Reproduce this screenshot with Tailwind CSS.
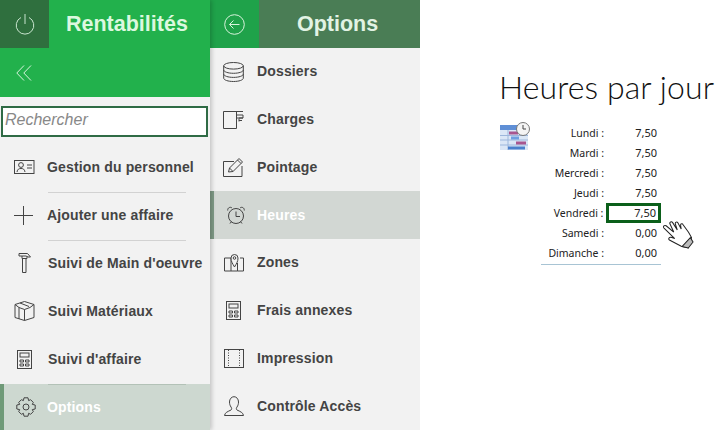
<!DOCTYPE html>
<html lang="fr"><head><meta charset="utf-8">
<script src="https://cdn.jsdelivr.net/npm/@tailwindcss/browser@4"></script></head>
<body class="bg-white">
<div class="flex h-[430px] w-[723px] overflow-hidden bg-white font-['Liberation_Sans',sans-serif]">

<aside class="relative z-20 flex h-[430px] w-[210px] shrink-0 flex-col bg-[#f2f2f2] shadow-[2px_0_4px_rgba(0,0,0,0.18)]">
  <div class="flex h-[48px] bg-[#22b14c]">
    <div class="flex w-[49px] items-center justify-center bg-[#2f6f3e]">
      <svg width="22" height="24" viewBox="0 0 22 24" fill="none" stroke="#c9e5cf" stroke-width="1"><path d="M7 5.500a8.800 8.800 0 1 0 8 0"/><path d="M11 2v10"/></svg>
    </div>
    <div class="pl-[17px] text-[21.5px] leading-[48px] font-bold text-[#dcf8df]">Rentabilités</div>
  </div>
  <div class="flex h-[49px] items-center bg-[#22b14c] pl-[16px]">
    <svg width="16" height="16" viewBox="0 0 16 16" fill="none" stroke="#d8f3dc" stroke-width="1"><path d="M8 .5 .8 8 8 15.500M15 .5 7.800 8 15 15.500"/></svg>
  </div>
  <div class="h-[46px] px-[1px] pt-[9px]">
    <div class="h-[31px] w-[207px] border-2 border-[#2f6b45] bg-white pl-[2px] text-[16px] leading-[24px] text-[#888] italic">Rechercher</div>
  </div>

  <div class="flex h-12 items-center text-[14px] font-bold tracking-[0.15px] text-[#444]">
    <div class="flex w-[47px] justify-center pl-[1px]"><svg width="21" height="14" viewBox="0 0 21 14" fill="none" stroke="#444" stroke-width="1"><rect x=".5" y=".5" width="19.500" height="13"/><circle cx="7" cy="5" r="2.400"/><path d="M3 12c.5-3 2-3.500 4-3.500s3.500.5 4 3.500M13 5h5M13 8h5"/></svg></div>
    <span>Gestion du personnel</span>
  </div>
  <div class="mt-px -mb-[2px] ml-[48px] h-px w-[138px] bg-[#d2d2d2]"></div>
  <div class="flex h-12 items-center text-[14px] font-bold tracking-[0.15px] text-[#444]">
    <div class="flex w-[47px] justify-center"><svg width="19" height="19" viewBox="0 0 19 19" fill="none" stroke="#444" stroke-width="1"><path d="M9.500 0v19M0 9.500h19"/></svg></div>
    <span>Ajouter une affaire</span>
  </div>
  <div class="mt-px -mb-[2px] ml-[48px] h-px w-[138px] bg-[#d2d2d2]"></div>
  <div class="flex h-12 items-center text-[14px] font-bold tracking-[0.15px] text-[#444]">
    <div class="flex w-[48px] justify-center"><svg width="13" height="20" viewBox="0 0 13 20" fill="none" stroke="#444" stroke-width="1"><path d="M1 .5h8.500l3 3.500H9.500L8.500 3H1zM4.500 5.500h3.500v14H4.500zM4 3v2.500h5V3"/></svg></div>
    <span>Suivi de Main d'oeuvre</span>
  </div>
  <div class="flex h-12 items-center text-[14px] font-bold tracking-[0.15px] text-[#444]">
    <div class="flex w-[48px] justify-center"><svg width="21" height="20" viewBox="0 0 21 20" fill="none" stroke="#444" stroke-width="1"><path d="M10.500.5 20 3.500v13l-9.500 3-9.500-3v-13zM1 3.500l4 3 5.500 2v11M20 3.500l-4 3-5.500 2M5 6.500V18M6 2l9 3.500"/></svg></div>
    <span>Suivi Matériaux</span>
  </div>
  <div class="flex h-12 items-center text-[14px] font-bold tracking-[0.15px] text-[#444]">
    <div class="flex w-[48px] justify-center"><svg width="15" height="19" viewBox="0 0 15 19" fill="none" stroke="#444" stroke-width="1"><rect x=".5" y=".5" width="14" height="18"/><rect x="3" y="3" width="9" height="4"/><path d="M3 10h3.500v2H3zM8.500 10H12v2H8.500zM3 14h3.500v2H3zM8.500 14H12v2H8.500z"/></svg></div>
    <span>Suivi d'affaire</span>
  </div>
  <div class="mt-px flex h-[46px] items-center border-l-[4px] border-[#6f9a78] bg-[#cdd8d0] text-[14px] font-bold tracking-[0.15px] text-white">
    <div class="flex w-[43px] justify-center"><svg width="20" height="20" viewBox="0 0 20 20" fill="none" stroke="#444" stroke-width="1"><path d="M8 .8h4l.6 2.800 2-.9 2.700 2.700-1 2 2.900.6v4l-2.900.6 1 2-2.700 2.700-2-1-.6 2.900H8l-.6-2.900-2 1-2.700-2.700 1-2-2.900-.6v-4l2.900-.6-1-2 2.700-2.700 2 .9z"/><circle cx="10" cy="10" r="3"/></svg></div>
    <span>Options</span>
  </div>
  <div class="absolute top-[384px] left-[48px] h-px w-[138px] bg-[#b3c2b7]"></div>
</aside>

<section class="z-10 flex h-[430px] w-[210px] shrink-0 flex-col bg-[#f2f2f2]">
  <div class="flex h-[48px] bg-[#4a7d55]">
    <div class="flex w-[49px] items-center justify-center bg-[#1fa24a]">
      <svg width="21" height="21" viewBox="0 0 21 21" fill="none" stroke="#d8f3dc" stroke-width="1"><circle cx="10.500" cy="10.500" r="9.800"/><path d="M15.500 10.500h-10M9.500 6.500l-4 4 4 4"/></svg>
    </div>
    <div class="pl-[38px] text-[21.5px] leading-[48px] font-bold text-[#e2f3e4]">Options</div>
  </div>
  <div class="flex h-12 items-center text-[14px] font-bold tracking-[0.15px] text-[#444]">
    <div class="flex w-[47px] justify-center"><svg width="21" height="20" viewBox="0 0 21 20" fill="none" stroke="#444" stroke-width="1"><ellipse cx="10.500" cy="3.800" rx="9.800" ry="3.300"/><path d="M.7 3.800v12.400c0 1.800 4.400 3.300 9.800 3.300s9.800-1.500 9.800-3.300V3.800M.7 8c0 1.800 4.400 3.300 9.800 3.300S20.300 9.800 20.300 8M.7 12.100c0 1.800 4.400 3.300 9.800 3.300s9.800-1.500 9.800-3.300"/></svg></div>
    <span>Dossiers</span>
  </div>
  <div class="flex h-12 items-center text-[14px] font-bold tracking-[0.15px] text-[#444]">
    <div class="flex w-[47px] justify-center"><svg width="21" height="18" viewBox="0 0 21 18" fill="none" stroke="#444" stroke-width="1"><path d="M13.500 17.500H.5V.5H20M13.500.5v17M14 4h6v3h-6M16 7.500v3M16 7h4M16 9.500h3"/></svg></div>
    <span>Charges</span>
  </div>
  <div class="flex h-12 items-center text-[14px] font-bold tracking-[0.15px] text-[#444]">
    <div class="flex w-[47px] justify-center"><svg width="21" height="20" viewBox="0 0 21 20" fill="none" stroke="#444" stroke-width="1"><path d="M11 4.500H.5v15H19V9M5.500 15l1-4L16 1.500l3.500 3.500L10 14.500zM6.500 11l3.500 3.500M14.500 3 18 6.500"/></svg></div>
    <span>Pointage</span>
  </div>
  <div class="flex h-12 items-center border-l-[4px] border-[#7f9a86] bg-[#d2d7d3] text-[14px] font-bold tracking-[0.15px] text-white">
    <div class="flex w-[43px] justify-center pl-[1px]"><svg width="18" height="19" viewBox="0 0 18 19" fill="none" stroke="#444" stroke-width="1"><circle cx="9" cy="10" r="7.500"/><path d="M9 5.500V10.500H13M3 17.500l1.500-2M15 17.500l-1.500-2M.7 4.500C.5 1.500 3.500.5 5 2M17.300 4.500c.2-3-2.800-4-4.300-2.500"/></svg></div>
    <span>Heures</span>
  </div>
  <div class="flex h-12 items-center text-[14px] font-bold tracking-[0.15px] text-[#444]">
    <div class="flex w-[47px] justify-center"><svg width="20" height="19" viewBox="0 0 20 19" fill="none" stroke="#444" stroke-width="1"><path d="M7 5H.5v13H7l6.500 0H19.500V5H16M7 5v13M13.500 10v8"/><path d="M10.500 14C8.500 10.500 7 8.500 7 5a3.500 3.500 0 0 1 7 0c0 3.500-1.500 5.500-3.500 9z" fill="#f2f2f2"/><circle cx="10.500" cy="5" r="1.300"/></svg></div>
    <span>Zones</span>
  </div>
  <div class="flex h-12 items-center text-[14px] font-bold tracking-[0.15px] text-[#444]">
    <div class="flex w-[47px] justify-center"><svg width="15" height="19" viewBox="0 0 15 19" fill="none" stroke="#444" stroke-width="1"><rect x=".5" y=".5" width="14" height="18"/><rect x="3" y="3" width="9" height="4"/><path d="M3 10h3.500v2H3zM8.500 10H12v2H8.500zM3 14h3.500v2H3zM8.500 14H12v2H8.500z"/></svg></div>
    <span>Frais annexes</span>
  </div>
  <div class="flex h-12 items-center text-[14px] font-bold tracking-[0.15px] text-[#444]">
    <div class="flex w-[47px] justify-center"><svg width="20" height="19" viewBox="0 0 20 19" fill="none" stroke="#444" stroke-width="1"><rect x=".5" y=".5" width="19" height="18"/><path d="M4.500 1v17M15.500 1v17" stroke-dasharray="1 1.500"/></svg></div>
    <span>Impression</span>
  </div>
  <div class="flex h-12 items-center text-[14px] font-bold tracking-[0.15px] text-[#444]">
    <div class="flex w-[47px] justify-center"><svg width="20" height="20" viewBox="0 0 20 20" fill="none" stroke="#444" stroke-width="1"><path d="M.5 19.500c.3-3 3.500-4 6.500-5.500 1-.8.800-1.800 0-3-1-1.500-1.500-3-1.500-5C5.500 3 7.500.7 10 .7s4.500 2.300 4.500 5.300c0 2-.5 3.500-1.500 5-.8 1.200-1 2.200 0 3 3 1.500 6.200 2.500 6.500 5.500z"/></svg></div>
    <span>Contrôle Accès</span>
  </div>
</section>

<main class="relative flex-1 bg-white pt-[69px] pl-[79px]">
  <h1 class="text-[32px] leading-[36px] font-light whitespace-nowrap text-[#111] font-['Lato',sans-serif] tracking-[0.1px]">Heures par jour</h1>
  <div class="flex pt-[18px]">
    <svg class="-mt-px ml-px" width="31" height="28" viewBox="0 0 31 28">
      <rect x="0" y="3" width="28" height="25" fill="#dbe7f6"/><rect x="0" y="3" width="28" height="5" fill="#5f8fd6"/>
      <path d="M0 13.500h28M0 18h28M0 23h28" stroke="#9db7dc"/><path d="M8 8v20" stroke="#9db7dc"/>
      <rect x="9" y="9.500" width="9" height="3" fill="#a8568f"/><rect x="11" y="14.500" width="8" height="3" fill="#6f9fe0"/><rect x="16" y="19.500" width="10" height="3" fill="#a8568f"/><rect x="8" y="24.500" width="17" height="3" fill="#4a80cc"/>
      <circle cx="23" cy="7" r="6.500" fill="#f4f4f4" stroke="#777"/><path d="M23 3v4h3" fill="none" stroke="#444"/>
    </svg>
    <div class="ml-[10px] w-[120px] border-b border-[#a8c4d4] pb-[1px] text-[11px] leading-[20px] text-[#222] font-['Noto_Sans',sans-serif]">
      <div class="flex"><span class="w-[63px] text-right text-[10.5px]">Lundi :</span><span class="w-[53px] text-right">7,50</span></div>
      <div class="flex"><span class="w-[63px] text-right text-[10.5px]">Mardi :</span><span class="w-[53px] text-right">7,50</span></div>
      <div class="flex"><span class="w-[63px] text-right text-[10.5px]">Mercredi :</span><span class="w-[53px] text-right">7,50</span></div>
      <div class="flex"><span class="w-[63px] text-right text-[10.5px]">Jeudi :</span><span class="w-[53px] text-right">7,50</span></div>
      <div class="flex"><span class="w-[63px] text-right text-[10.5px]">Vendredi :</span><span class="ml-[3px] h-[20px] w-[55px] border-[3px] border-[#0b5f1a] pr-[2px] text-right leading-[14px]">7,50</span></div>
      <div class="flex"><span class="w-[63px] text-right text-[10.5px]">Samedi :</span><span class="w-[53px] text-right">0,00</span></div>
      <div class="flex"><span class="w-[63px] text-right text-[10.5px]">Dimanche :</span><span class="w-[53px] text-right">0,00</span></div>
    </div>
  </div>
  <svg class="absolute top-[218px] left-[243px]" width="34" height="34" viewBox="0 0 34 34">
    <g transform="translate(2 -1) rotate(-20 15 17)">
    <path d="M12 29 3 19c-1-1.500 1-3 2.500-2l3 2.500L2 6c-.8-2 1.500-3 2.800-1.500l5 8.500-.8-9c0-2 2.500-2 3-.2l1.800 8.500.3-6.500c.3-1.800 2.400-1.600 2.700 0l1 7 .8-4c.5-1.500 2.500-1 2.500.5l2.500 9 1 6L18 33z" fill="#fff" stroke="#222" stroke-width="1"/>
    <path d="M12.500 29.500 18 33l6.500-4-1-5z" fill="#bbb" stroke="#222" stroke-width="1"/>
    </g>
  </svg>
</main>
</div>
</body></html>
